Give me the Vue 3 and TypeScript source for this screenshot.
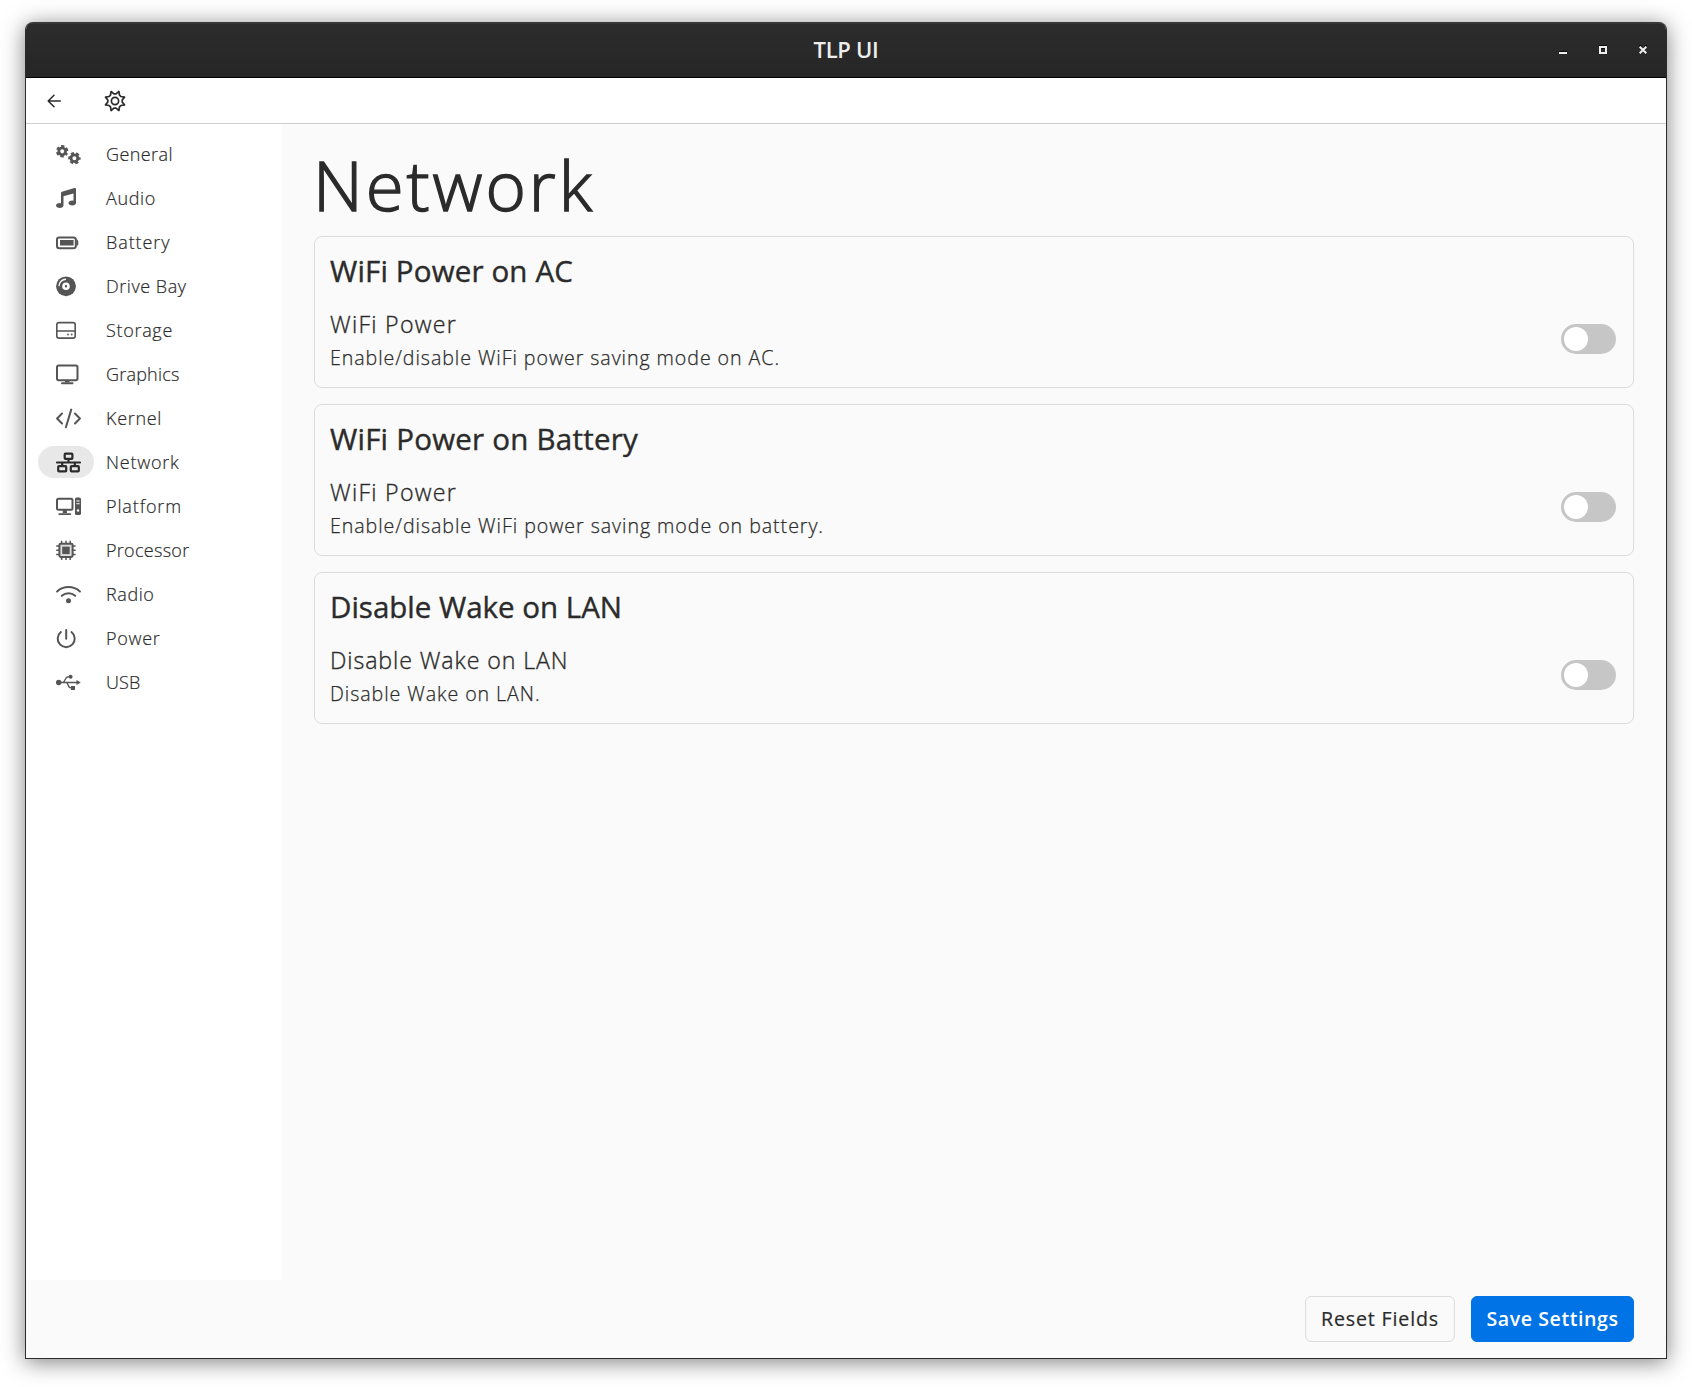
<script setup lang="ts">
import type { Directive } from 'vue'

interface NavItem {
  id: string
  label: string
  width: number
}

interface Setting {
  title: string
  titleWidth: number
  label: string
  labelWidth: number
  description: string
  descriptionWidth: number
}

// Tracks a line of text out (or in) so that it fills the given width.
const vTrack: Directive<HTMLElement, number> = {
  mounted(el, binding) {
    const count = (el.textContent ?? '').length
    const natural = el.getBoundingClientRect().width
    el.style.letterSpacing = `${(binding.value - natural) / count}px`
  },
}

const active = 'network'

const nav: NavItem[] = [
  { id: 'general', label: 'General', width: 67 },
  { id: 'audio', label: 'Audio', width: 50 },
  { id: 'battery', label: 'Battery', width: 64.5 },
  { id: 'drive', label: 'Drive Bay', width: 80.5 },
  { id: 'storage', label: 'Storage', width: 67 },
  { id: 'graphics', label: 'Graphics', width: 73.5 },
  { id: 'kernel', label: 'Kernel', width: 56 },
  { id: 'network', label: 'Network', width: 73.5 },
  { id: 'platform', label: 'Platform', width: 76 },
  { id: 'processor', label: 'Processor', width: 83.5 },
  { id: 'radio', label: 'Radio', width: 48.5 },
  { id: 'power', label: 'Power', width: 54.5 },
  { id: 'usb', label: 'USB', width: 34.5 },
]

const settings: Setting[] = [
  {
    title: 'WiFi Power on AC',
    titleWidth: 243,
    label: 'WiFi Power',
    labelWidth: 127,
    description: 'Enable/disable WiFi power saving mode on AC.',
    descriptionWidth: 450,
  },
  {
    title: 'WiFi Power on Battery',
    titleWidth: 308,
    label: 'WiFi Power',
    labelWidth: 127,
    description: 'Enable/disable WiFi power saving mode on battery.',
    descriptionWidth: 494,
  },
  {
    title: 'Disable Wake on LAN',
    titleWidth: 292,
    label: 'Disable Wake on LAN',
    labelWidth: 238.5,
    description: 'Disable Wake on LAN.',
    descriptionWidth: 210.5,
  },
]
</script>

<template>
  <div class="desktop">
    <div class="window">
      <header class="titlebar">
        <span class="title"><span v-track="65">TLP UI</span></span>
        <div class="controls">
          <svg width="8" height="10" viewBox="0 0 8 10"><path d="M0 6.5h8" stroke="#0c0c0c" /><path d="M0 8h8" stroke="#eee" stroke-width="2" /></svg>
          <svg width="8" height="10" viewBox="0 0 8 10"><path d="M0 .5h8M2 3.5h4" stroke="#0c0c0c" /><path d="M1 2h6v6H1z" fill="none" stroke="#eee" stroke-width="2" /></svg>
          <svg width="8" height="10" viewBox="0 0 8 10"><path d="M0 .5h2.500M5.500 .5h2.500" stroke="#0c0c0c" /><path d="M.7 1.700l6.600 6.600M7.300 1.700l-6.600 6.600" stroke="#eee" stroke-width="2" /></svg>
        </div>
      </header>

      <div class="toolbar">
        <svg class="back" width="14" height="14" viewBox="0 0 14 14"><path d="M7 1.200L1.200 7 7 12.800M1.400 7H13.300" fill="none" stroke="#2b2b2b" stroke-width="1.500" stroke-linecap="round" stroke-linejoin="round" /></svg>
        <svg class="gear" width="22" height="22" viewBox="-11 -11 22 22">
          <g fill="none" stroke="#2b2b2b" stroke-width="1.700" stroke-linejoin="round">
            <path d="M-3.900-9.500L-1-7.200H1L3.900-9.500 4.500-5.900 5.900-4.500 9.500-3.900 7.200-1V1L9.500 3.900 5.900 4.500 4.500 5.900 3.900 9.500 1 7.200H-1L-3.900 9.500-4.500 5.900-5.900 4.500-9.500 3.900-7.200 1V-1L-9.500-3.900-5.900-4.500-4.500-5.900z" />
            <circle r="3.600" />
          </g>
        </svg>
      </div>

      <div class="body">
        <nav class="sidebar">
          <div v-for="item in nav" :key="item.id" class="item" :class="{ active: item.id === active }">
            <span class="pill">
              <svg v-if="item.id === 'general'" width="26" height="21" viewBox="0 0 26 21">
                <g fill="none" stroke="currentColor">
                  <g transform="translate(6.200 7.300) rotate(30)"><circle r="3.400" stroke-width="2.800" /><circle r="5.200" stroke-width="2" stroke-dasharray="3.200 2.245" stroke-dashoffset="1.600" /></g>
                  <g transform="translate(18.400 14.200)"><circle r="3.400" stroke-width="2.800" /><circle r="5.200" stroke-width="2" stroke-dasharray="3.200 2.245" stroke-dashoffset="1.600" /></g>
                </g>
              </svg>
              <svg v-else-if="item.id === 'audio'" width="20" height="20" viewBox="0 0 512 512">
                <path fill="currentColor" d="M470.380 1.510L150.410 96A32 32 0 0 0 128 126.510v261.410A139 139 0 0 0 96 384c-53 0-96 28.660-96 64s43 64 96 64 96-28.660 96-64V214.320l256-75v184.610a138.400 138.400 0 0 0-32-3.930c-53 0-96 28.660-96 64s43 64 96 64 96-28.650 96-64V32a32 32 0 0 0-41.620-30.490z" />
              </svg>
              <svg v-else-if="item.id === 'battery'" width="23" height="21" viewBox="0 0 23 21">
                <rect x="1" y="5.400" width="18.800" height="10.800" rx="2.300" fill="none" stroke="currentColor" stroke-width="2" />
                <path d="M4 8h13.600v5.600H4zM20.500 7.200h.5l1.300 1.700v3.600l-1.300 1.700h-.5z" fill="currentColor" />
              </svg>
              <svg v-else-if="item.id === 'drive'" width="20" height="21" viewBox="0 0 20 21">
                <circle cx="10" cy="10.300" r="9.900" fill="currentColor" />
                <circle cx="10" cy="10.300" r="2.500" fill="none" stroke="#fff" stroke-width="2.600" />
                <path d="M3 10.300a7 7 0 0 1 7-7" fill="none" stroke="#fff" stroke-width="1.400" />
              </svg>
              <svg v-else-if="item.id === 'storage'" width="20" height="21" viewBox="0 0 20 21">
                <rect x=".8" y="2.600" width="18.400" height="15.500" rx="2.200" fill="none" stroke="currentColor" stroke-width="1.600" />
                <path d="M.8 11h18.400" stroke="currentColor" stroke-width="1.500" />
                <circle cx="12" cy="14.500" r=".9" fill="currentColor" /><circle cx="15.700" cy="14.500" r=".9" fill="currentColor" />
              </svg>
              <svg v-else-if="item.id === 'graphics'" width="23" height="21" viewBox="0 0 23 21">
                <rect x="1" y="1.500" width="20.500" height="14.700" rx="1.700" fill="none" stroke="currentColor" stroke-width="2" />
                <path d="M9.200 16h4l.4 2.500H8.800z" fill="currentColor" /><path d="M6 19.200h10.500" stroke="currentColor" stroke-width="2" stroke-linecap="round" />
              </svg>
              <svg v-else-if="item.id === 'kernel'" width="25" height="21" viewBox="0 0 25 21">
                <path d="M6 5.500L1.100 10.500 6 15.500M19 5.500l4.900 5-4.900 5M15.200 1.600L9.900 19.200" fill="none" stroke="currentColor" stroke-width="2" stroke-linecap="round" stroke-linejoin="round" />
              </svg>
              <svg v-else-if="item.id === 'network'" width="25" height="21" viewBox="0 0 25 21">
                <g fill="none" stroke="currentColor" stroke-width="2.200">
                  <rect x="8.700" y="1.700" width="7.700" height="5.200" rx=".8" />
                  <rect x="2.200" y="14.200" width="8" height="5.200" rx=".8" />
                  <rect x="14.800" y="14.200" width="8" height="5.200" rx=".8" />
                  <path d="M.8 10.500h23.400" stroke-width="1.900" stroke-linecap="round" /><path d="M12.500 7.500v3M6.200 10.500v3M18.800 10.500v3" />
                </g>
              </svg>
              <svg v-else-if="item.id === 'platform'" width="25" height="21" viewBox="0 0 25 21">
                <rect x="1" y="2.700" width="15.500" height="11" rx="1.500" fill="none" stroke="currentColor" stroke-width="2" />
                <path d="M7 14h3.700l.4 3H6.600z" fill="currentColor" /><path d="M3.300 18.100h11" stroke="currentColor" stroke-width="1.800" stroke-linecap="round" />
                <rect x="19" y="1.600" width="6" height="17.500" rx="1.600" fill="currentColor" />
                <path d="M20.400 5h3.200M20.400 7.800h3.200" stroke="#fff" stroke-width="1.100" /><circle cx="22" cy="14.500" r="1.200" fill="#fff" />
              </svg>
              <svg v-else-if="item.id === 'processor'" width="20" height="21" viewBox="0 0 20 21">
                <path d="M5.600 .7v19.200M10 .7v19.200M14.200 .7v19.200M.2 6h19.400M.2 10.300h19.400M.2 14.600h19.400" stroke="currentColor" stroke-width="1.500" />
                <rect x="3.400" y="3.700" width="13.200" height="13.200" rx="1.300" fill="#ddd" stroke="currentColor" stroke-width="2" />
                <path d="M6.200 6.600h7.500v7.500H6.200z" fill="currentColor" />
              </svg>
              <svg v-else-if="item.id === 'radio'" width="25" height="21" viewBox="0 0 25 21">
                <path d="M1.100 7.500a17 17 0 0 1 22.800 0M5.800 11.800a10.200 10.200 0 0 1 13.400 0" fill="none" stroke="currentColor" stroke-width="2" stroke-linecap="round" />
                <circle cx="12.500" cy="16.800" r="2.500" fill="currentColor" />
              </svg>
              <svg v-else-if="item.id === 'power'" width="20" height="21" viewBox="0 0 20 21">
                <path d="M4.900 4a8.500 8.500 0 1 0 10.600 0M10.200 2v8.800" fill="none" stroke="currentColor" stroke-width="2" stroke-linecap="round" />
              </svg>
              <svg v-else width="25" height="21" viewBox="0 0 25 21">
                <path d="M2 10.500h19M6.500 10.500C9.500 10.500 8.600 4.800 12 4.800h2M10.200 10.500C12.600 10.500 11.300 15.800 15 15.800h2" fill="none" stroke="currentColor" stroke-width="1.300" />
                <circle cx="2.700" cy="10.500" r="2.700" fill="currentColor" /><circle cx="14.600" cy="4.700" r="2" fill="currentColor" />
                <path d="M15 14h4v4h-4zM20.500 8.100l4.300 2.400-4.300 2.400z" fill="currentColor" />
              </svg>
            </span>
            <span class="name"><span v-track="item.width">{{ item.label }}</span></span>
          </div>
        </nav>

        <main class="content">
          <h1><span v-track="282">Network</span></h1>
          <section v-for="(s, i) in settings" :key="i" class="card">
            <h2><span v-track="s.titleWidth">{{ s.title }}</span></h2>
            <div class="row">
              <div>
                <p class="label"><span v-track="s.labelWidth">{{ s.label }}</span></p>
                <p class="description"><span v-track="s.descriptionWidth">{{ s.description }}</span></p>
              </div>
              <span class="toggle"><span class="knob"></span></span>
            </div>
          </section>
        </main>
      </div>

      <footer class="footer">
        <button class="btn reset"><span v-track="118">Reset Fields</span></button>
        <button class="btn save"><span v-track="132">Save Settings</span></button>
      </footer>
    </div>
  </div>
</template>

<style>
body {
  margin: 0;
  background: #fff;
}
</style>

<style scoped>
* {
  box-sizing: border-box;
}

.desktop {
  width: 1692px;
  height: 1387px;
  padding: 22px 25px 28px;
  overflow: hidden;
  background: #fff;
  font-family: 'Open Sans', 'Noto Sans', sans-serif;
  font-weight: 300;
  color: #2b2b2b;
}

.window {
  display: flex;
  flex-direction: column;
  height: 1337px;
  overflow: hidden;
  border-radius: 8px 8px 0 0;
  background: #fafafa;
  border: 1px solid #2b2b2b;
  border-top: 0;
  box-shadow: 0 3px 22px rgba(0, 0, 0, 0.5);
}

.titlebar {
  position: relative;
  flex: none;
  height: 56px;
  display: flex;
  align-items: center;
  justify-content: center;
  background: linear-gradient(#2c2c2c, #262626);
  border-top: 2px solid #383838;
  border-bottom: 1px solid #000;
}

.title {
  padding-bottom: 4px;
  color: #eee;
  font-size: 22px;
  font-weight: 600;
  line-height: 30px;
}

.controls {
  position: absolute;
  right: 19px;
  top: 21px;
  display: flex;
  gap: 32px;
}

svg {
  display: block;
  flex: none;
}

.toolbar {
  flex: none;
  height: 46px;
  display: flex;
  align-items: center;
  padding-left: 21px;
  background: #fff;
  border-bottom: 1px solid #cfcfcf;
}

.gear {
  margin: 1px 0 0 43px;
}

.body {
  display: flex;
  flex: none;
  height: 1156px;
}

.sidebar {
  width: 256px;
  padding: 8px 12px;
  background: #fff;
}

.item {
  display: flex;
  align-items: center;
  height: 44px;
}

.pill {
  display: flex;
  align-items: center;
  width: 56px;
  height: 32px;
  padding-left: 18px;
  border-radius: 16px;
  color: #555;
}

.active .pill {
  background: #e8e8e8;
  color: #2b2b2b;
}

.name {
  margin-left: 12px;
  font-size: 18px;
  line-height: 24px;
  white-space: nowrap;
  -webkit-text-stroke: 0.2px;
}

.content {
  flex: 1;
  padding: 14px 32px 0;
}

h1 {
  height: 98px;
  margin: 0 0 0 -1px;
  font-size: 69px;
  line-height: 92px;
  font-weight: 300;
  -webkit-text-stroke: 1.4px;
}

.card {
  height: 152px;
  margin-bottom: 16px;
  padding: 14px 17px 0 15px;
  border: 1px solid #dcdcdc;
  border-radius: 8px;
}

h2 {
  margin: 0;
  font-size: 29.5px;
  line-height: 40px;
  font-weight: 400;
  -webkit-text-stroke: 0.4px;
}

.row {
  display: flex;
  justify-content: space-between;
  align-items: flex-start;
  padding-top: 15px;
}

p {
  margin: 0;
}

.label {
  font-size: 23.2px;
  line-height: 36px;
  -webkit-text-stroke: 0.35px;
}

.description {
  font-size: 19.6px;
  line-height: 31px;
  -webkit-text-stroke: 0.25px;
}

h1,
h2,
p {
  white-space: nowrap;
}

.toggle {
  display: block;
  width: 55px;
  height: 30px;
  margin-top: 18px;
  padding: 3px;
  border-radius: 15px;
  background: #c6c6c6;
}

.knob {
  display: block;
  width: 24px;
  height: 24px;
  border-radius: 50%;
  background: #fff;
}

.footer {
  display: flex;
  justify-content: flex-end;
  gap: 16px;
  padding: 16px 32px 0 0;
}

.btn {
  height: 46px;
  padding: 0 0 1px;
  border: 1px solid #dcdcdc;
  border-radius: 6px;
  background: #fafafa;
  font-family: inherit;
  font-size: 19.6px;
  font-weight: 400;
  color: #2b2b2b;
  white-space: nowrap;
  -webkit-text-stroke: 0.2px;
}

.reset {
  width: 150px;
}

.save {
  width: 163px;
  background: #0073e6;
  border-color: #0073e6;
  color: #fff;
  font-weight: 600;
  -webkit-text-stroke: 0;
}
</style>
